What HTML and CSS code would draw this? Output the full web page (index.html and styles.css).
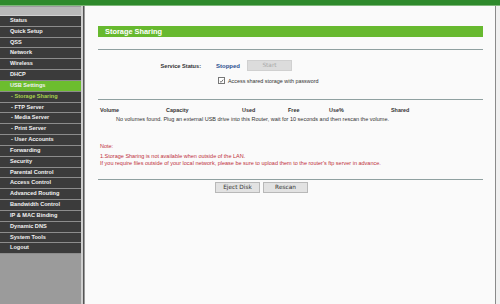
FILE: index.html
```html
<!DOCTYPE html>
<html>
<head>
<meta charset="utf-8">
<link rel="stylesheet" href="styles.css">
</head>
<body>
<div class="topbar"></div>
<div class="main">
  <nav class="sidebar">
    <div class="side-head"></div>
    <ul class="menu">
      <li>Status</li>
      <li>Quick Setup</li>
      <li>QSS</li>
      <li>Network</li>
      <li>Wireless</li>
      <li>DHCP</li>
      <li class="active">USB Settings</li>
      <li class="sub current">- Storage Sharing</li>
      <li class="sub">- FTP Server</li>
      <li class="sub">- Media Server</li>
      <li class="sub">- Print Server</li>
      <li class="sub">- User Accounts</li>
      <li>Forwarding</li>
      <li>Security</li>
      <li>Parental Control</li>
      <li>Access Control</li>
      <li>Advanced Routing</li>
      <li>Bandwidth Control</li>
      <li>IP &amp; MAC Binding</li>
      <li>Dynamic DNS</li>
      <li>System Tools</li>
      <li>Logout</li>
    </ul>
  </nav>
  <div class="divider"></div>
  <main class="content">
    <div class="panel">
      <div class="title">Storage Sharing</div>
      <div class="rule rule-top"></div>
      <div class="status-row">
        <span class="label">Service Status:</span>
        <span class="stopped">Stopped</span>
        <button class="btn btn-start" disabled>Start</button>
      </div>
      <div class="check-row">
        <span class="checkbox"><svg width="6" height="6" viewBox="0 0 6 6"><path d="M1 3.2 L2.5 4.6 L5 1.4" fill="none" stroke="#444" stroke-width="0.9"/></svg></span>
        <span>Access shared storage with password</span>
      </div>
      <div class="rule rule-mid"></div>
      <div class="thead">
        <span>Volume</span><span>Capacity</span><span>Used</span><span>Free</span><span>Use%</span><span>Shared</span>
      </div>
      <div class="empty">No volumes found. Plug an external USB drive into this Router, wait for 10 seconds and then rescan the volume.</div>
      <div class="note">
        <div class="note-title">Note:</div>
        <div>1.Storage Sharing is not available when outside of the LAN.</div>
        <div>If you require files outside of your local network, please be sure to upload them to the router's ftp server in advance.</div>
      </div>
      <div class="rule rule-bot"></div>
      <div class="actions">
        <button class="btn">Eject Disk</button>
        <button class="btn">Rescan</button>
      </div>
    </div>
  </main>
  <div class="edge"></div>
</div>
</body>
</html>
```

FILE: styles.css
```css
html, body {
  margin: 0;
  padding: 0;
}
body {
  width: 500px;
  height: 304px;
  overflow: hidden;
  background: #f4f4f4;
  font-family: "Liberation Sans", Arial, sans-serif;
}
.topbar {
  height: 5px;
  background: #2f8a2c;
  border-bottom: 1px solid #7fb77a;
  box-shadow: 0 1px 0 #e8e8e8;
}
.main {
  display: flex;
  height: 298px;
}
.sidebar {
  width: 81px;
  background: #9b9b9b;
  display: flex;
  flex-direction: column;
}
.side-head {
  height: 8px;
  margin-top: 1px;
  background: #b9b9b9;
  border-bottom: 1px solid #d0d0d0;
}
.menu {
  list-style: none;
  margin: 0;
  padding: 0;
}
.menu li {
  height: 9.83px;
  line-height: 9.83px;
  background: #3b3b3b;
  border-bottom: 1px solid #8c8c8c;
  color: #f2f2f2;
  font-size: 5.6px;
  font-weight: bold;
  padding-left: 10px;
  white-space: nowrap;
}
.menu li.active {
  background: #6cbd2e;
}
.menu li.sub {
  padding-left: 11px;
}
.menu li.current {
  color: #a8d24e;
}
.divider {
  width: 4px;
  background: linear-gradient(to right, #cfcfcf 0, #cfcfcf 2px, #555 2px, #555 3px, #9a9a9a 3px);
}
.content {
  flex: 1;
  background: #fafafa;
  border-right: 1px solid #8a8a8a;
  padding: 20px 11px 0 13px;
}
.edge {
  width: 4px;
  background: #f0f0f0;
}
.panel {
  width: 385px;
}
.title {
  height: 11px;
  line-height: 11px;
  background: #67b92f;
  color: #fff;
  font-size: 7.4px;
  font-weight: bold;
  padding-left: 7px;
}
.rule {
  height: 1px;
  background: #8fa0a0;
}
.rule-top { margin-top: 12px; }
.status-row {
  display: flex;
  align-items: center;
  height: 11px;
  margin-top: 10px;
  font-size: 5.6px;
}
.label {
  width: 103px;
  text-align: right;
  font-weight: bold;
  color: #333;
}
.stopped {
  width: 31px;
  margin-left: 15px;
  color: #2b4f8f;
  font-weight: bold;
  font-size: 6px;
}
.btn {
  height: 11px;
  width: 45px;
  padding: 0;
  border: 1px solid #b8b8b8;
  background: #e2e2e2;
  color: #333;
  font-family: "DejaVu Sans", sans-serif;
  font-size: 5.8px;
  line-height: 9px;
}
.btn-start {
  color: #aaa;
  background: #dcdcdc;
  border-color: #d0d0d0;
}
.check-row {
  display: flex;
  align-items: center;
  height: 9px;
  margin-top: 5px;
  padding-left: 120px;
  font-size: 5.4px;
  color: #333;
}
.checkbox {
  display: inline-flex;
  align-items: center;
  justify-content: center;
  width: 5px;
  height: 5px;
  border: 1px solid #777;
  background: #fff;
  margin-right: 3px;
}
.rule-mid { margin-top: 14px; }
.thead {
  display: grid;
  grid-template-columns: 66px 76px 46px 41px 62px 1fr;
  padding-left: 2px;
  margin-top: 6px;
  height: 8px;
  line-height: 8px;
  font-size: 5.4px;
  font-weight: bold;
  color: #333;
}
.empty {
  margin-top: 1px;
  height: 8px;
  line-height: 8px;
  font-size: 5.5px;
  color: #333;
  padding-left: 18px;
  white-space: nowrap;
}
.note {
  margin-top: 20px;
  color: #c0303a;
  font-size: 5.5px;
  line-height: 6.5px;
  padding-left: 2px;
  white-space: nowrap;
}
.note-title {
  margin-bottom: 3.5px;
}
.rule-bot { margin-top: 13px; }
.actions {
  display: flex;
  gap: 3px;
  margin-top: 2px;
  padding-left: 117px;
}
```
